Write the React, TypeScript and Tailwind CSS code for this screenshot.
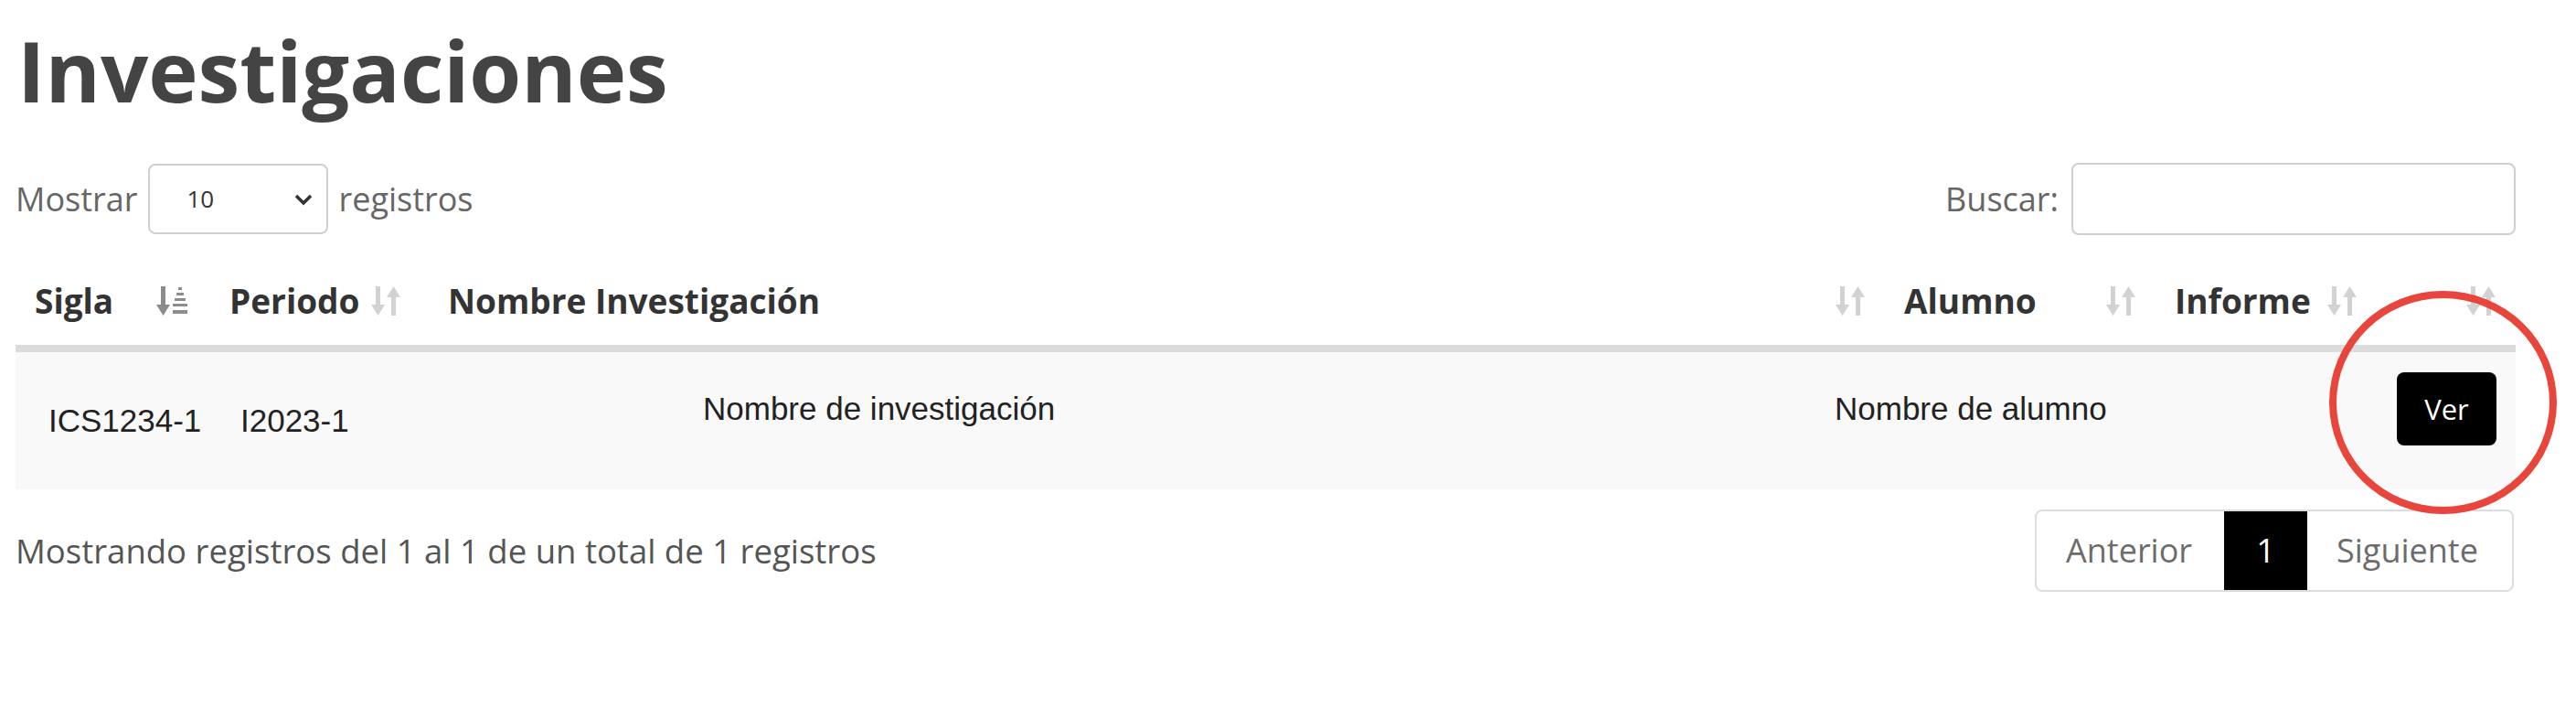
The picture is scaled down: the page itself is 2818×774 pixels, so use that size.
import React from "react";

const sans = "font-['Open_Sans',sans-serif]";
const arial = "font-['Liberation_Sans',Arial,sans-serif]";

const SortIcon: React.FC = () => (
    <svg width="36" height="34" viewBox="0 0 36 34">
        <g fill="#d2d2d2">
            <rect x="7" y="1" width="5" height="24" />
            <polygon points="2,21 17,21 9.5,33" />
            <rect x="24" y="9" width="5" height="24" />
            <polygon points="19,13 34,13 26.5,1" />
        </g>
    </svg>
);

const SortAscIcon: React.FC = () => (
    <svg width="40" height="34" viewBox="0 0 40 34">
        <g fill="#8c8c8c">
            <rect x="6" y="1" width="5" height="24" />
            <polygon points="1,21 16,21 8.5,33" />
            <rect x="25" y="2" width="4" height="3" />
            <rect x="23" y="8" width="8" height="3" />
            <rect x="21" y="14" width="12" height="3" />
            <rect x="19" y="20" width="16" height="3" />
            <rect x="19" y="27" width="16" height="4" />
        </g>
    </svg>
);

const HeaderCell: React.FC<{ label?: string; width: string; pl?: string; icon?: React.ReactNode }> = ({ label, width, pl, icon }) => (
    <div className={`${width} ${pl ?? "pl-[21px]"} pr-[20px] flex items-center justify-between`}>
        <span className="text-[37px] font-bold text-[#333]">{label}</span>
        {icon ?? <SortIcon />}
    </div>
);

const App: React.FC = () => {
    return (
        <div className={`relative w-[2818px] h-[774px] bg-white pl-[17px] ${sans}`}>
            <h1 className="pt-[31px] pl-[2px] text-[92px] font-bold leading-none text-[#444]">Investigaciones</h1>

            {/* controles */}
            <div className="mt-[55px] w-[2735px] h-[79px] flex items-center justify-between text-[36px] text-[#666]">
                <div className="flex items-center">
                    <span>Mostrar</span>
                    <div className="ml-[12px] w-[197px] h-[77px] border-2 border-[#cfcfcf] rounded-[8px] flex items-center justify-between pl-[40px] pr-[14px]">
                        <span className="text-[26px] text-[#333]">10</span>
                        <svg width="22" height="14" viewBox="0 0 22 14">
                            <polyline points="3,3 11,11 19,3" fill="none" stroke="#333" strokeWidth="3.5" />
                        </svg>
                    </div>
                    <span className="ml-[11px]">registros</span>
                </div>
                <div className="flex items-center">
                    <span>Buscar:</span>
                    <div className="ml-[14px] w-[486px] h-[79px] border-2 border-[#cfcfcf] rounded-[8px]" />
                </div>
            </div>

            {/* tabla */}
            <div className="mt-[23px] w-[2735px]">
                <div className="flex h-[105px] border-b-[8px] border-[#dcdcdc]">
                    <HeaderCell label="Sigla" width="w-[213px]" icon={<SortAscIcon />} />
                    <HeaderCell label="Periodo" width="w-[230px]" />
                    <HeaderCell label="Nombre Investigación" width="w-[1602px]" pl="pl-[30px]" />
                    <HeaderCell label="Alumno" width="w-[296px]" />
                    <HeaderCell label="Informe" width="w-[242px]" />
                    <HeaderCell width="w-[152px]" />
                </div>
                <div className={`flex items-center h-[150px] bg-[#f9f9f9] text-[35px] text-[#222] ${arial}`}>
                    <div className="w-[210px] pl-[36px]">ICS1234-1</div>
                    <div className="w-[506px] pl-[36px]">I2023-1</div>
                    <div className="w-[1238px] pl-[36px] pb-[26px]">Nombre de investigación</div>
                    <div className="w-[615px] pl-[36px] pb-[26px]">Nombre de alumno</div>
                    <div className="w-[166px] pl-[36px] pb-[26px]">
                        <button className={`w-[109px] h-[80px] bg-black rounded-[8px] text-white text-[31px] ${sans}`}>Ver</button>
                    </div>
                </div>
            </div>

            {/* pie */}
            <div className="mt-[22px] w-[2733px] flex items-center justify-between">
                <span className="text-[36.5px] text-[#555]">Mostrando registros del 1 al 1 de un total de 1 registros</span>
                <div className="flex h-[90px] border-2 border-[#dddddd] rounded-[8px] overflow-hidden text-[36px] text-[#6c6c6c]">
                    <div className="w-[205px] pl-[32px] flex items-center">Anterior</div>
                    <div className="w-[91px] bg-black text-white flex items-center justify-center">1</div>
                    <div className="w-[224px] pl-[32px] flex items-center">Siguiente</div>
                </div>
            </div>

            {/* marca roja */}
            <div className="absolute left-[2548px] top-[318px] w-[249px] h-[244px] rounded-[50%] border-[8px] border-[#e8453c]" />
        </div>
    );
};

export default App;
